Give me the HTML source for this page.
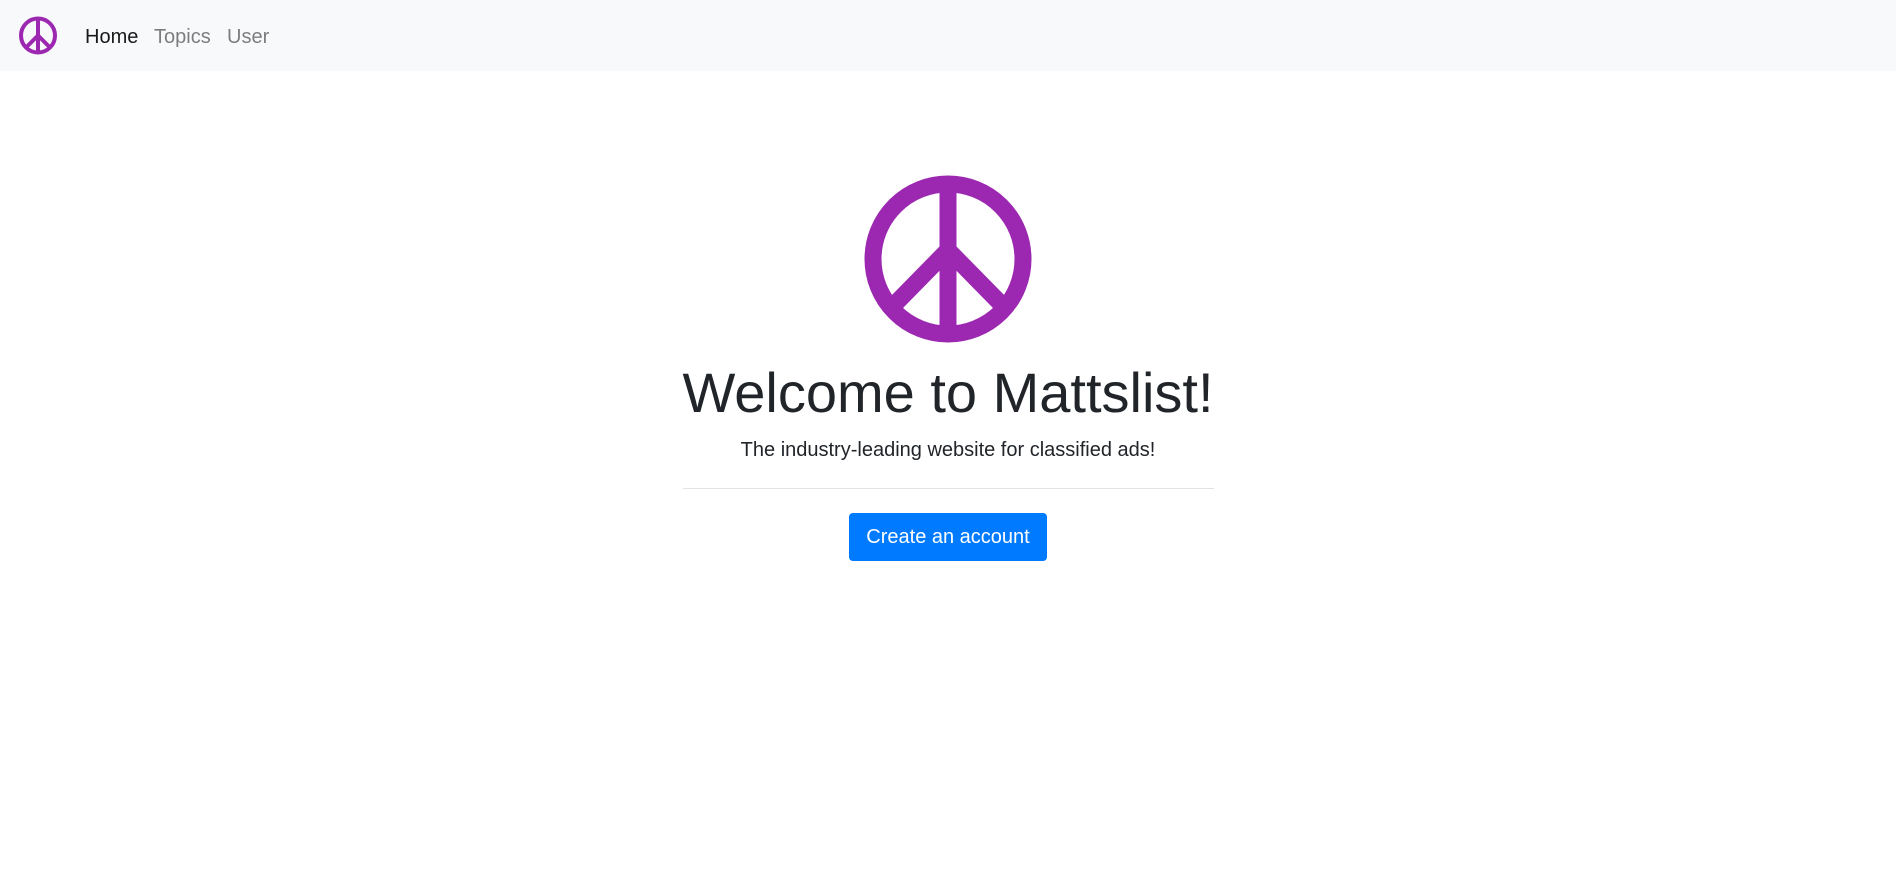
<!DOCTYPE html>
<html><head><meta charset="utf-8"><style>
body{margin:0;width:1896px;height:894px;background:#fff;font-family:"Liberation Sans",sans-serif;position:relative;overflow:hidden}
nav{position:absolute;left:0;top:0;width:1896px;height:71px;background:#f8f9fa}
.n{position:absolute;top:25px;font-size:20px;line-height:24px}
.t{position:absolute;left:0;width:1896px;text-align:center;color:#212529}
</style></head><body>
<nav>
<svg style="position:absolute;left:0;top:0" width="80" height="70" viewBox="0 0 80 70">
<g stroke="#9c27b0" stroke-width="4" fill="none"><circle cx="38" cy="35.5" r="17"/><path d="M38 18.5V52.5M38 35.5L26 47.5M38 35.5L50 47.5"/></g></svg>
<span class="n" style="left:85px;color:rgba(0,0,0,.9)">Home</span>
<span class="n" style="left:154px;color:rgba(0,0,0,.5)">Topics</span>
<span class="n" style="left:227px;color:rgba(0,0,0,.5)">User</span>
</nav>
<svg style="position:absolute;left:0;top:0" width="1896" height="400" viewBox="0 0 1896 400">
<g stroke="#9c27b0" stroke-width="17" fill="none"><circle cx="948" cy="259" r="75"/><path d="M948 184V334M948 250L894 305M948 250L1002 305"/></g></svg>
<div class="t" style="top:358px;font-size:56px;line-height:70px;font-weight:300">Welcome to Mattslist!</div>
<div class="t" style="top:435px;font-size:20px;line-height:30px">The industry-leading website for classified ads!</div>
<div style="position:absolute;left:683px;top:488px;width:531px;height:0;border-top:1px solid #e2e3e5"></div>
<div style="position:absolute;left:849px;top:513px;width:198px;height:48px;background:#007bff;border-radius:4px;color:#fff;font-size:20px;line-height:48px;text-align:center">Create an account</div>
</body></html>
